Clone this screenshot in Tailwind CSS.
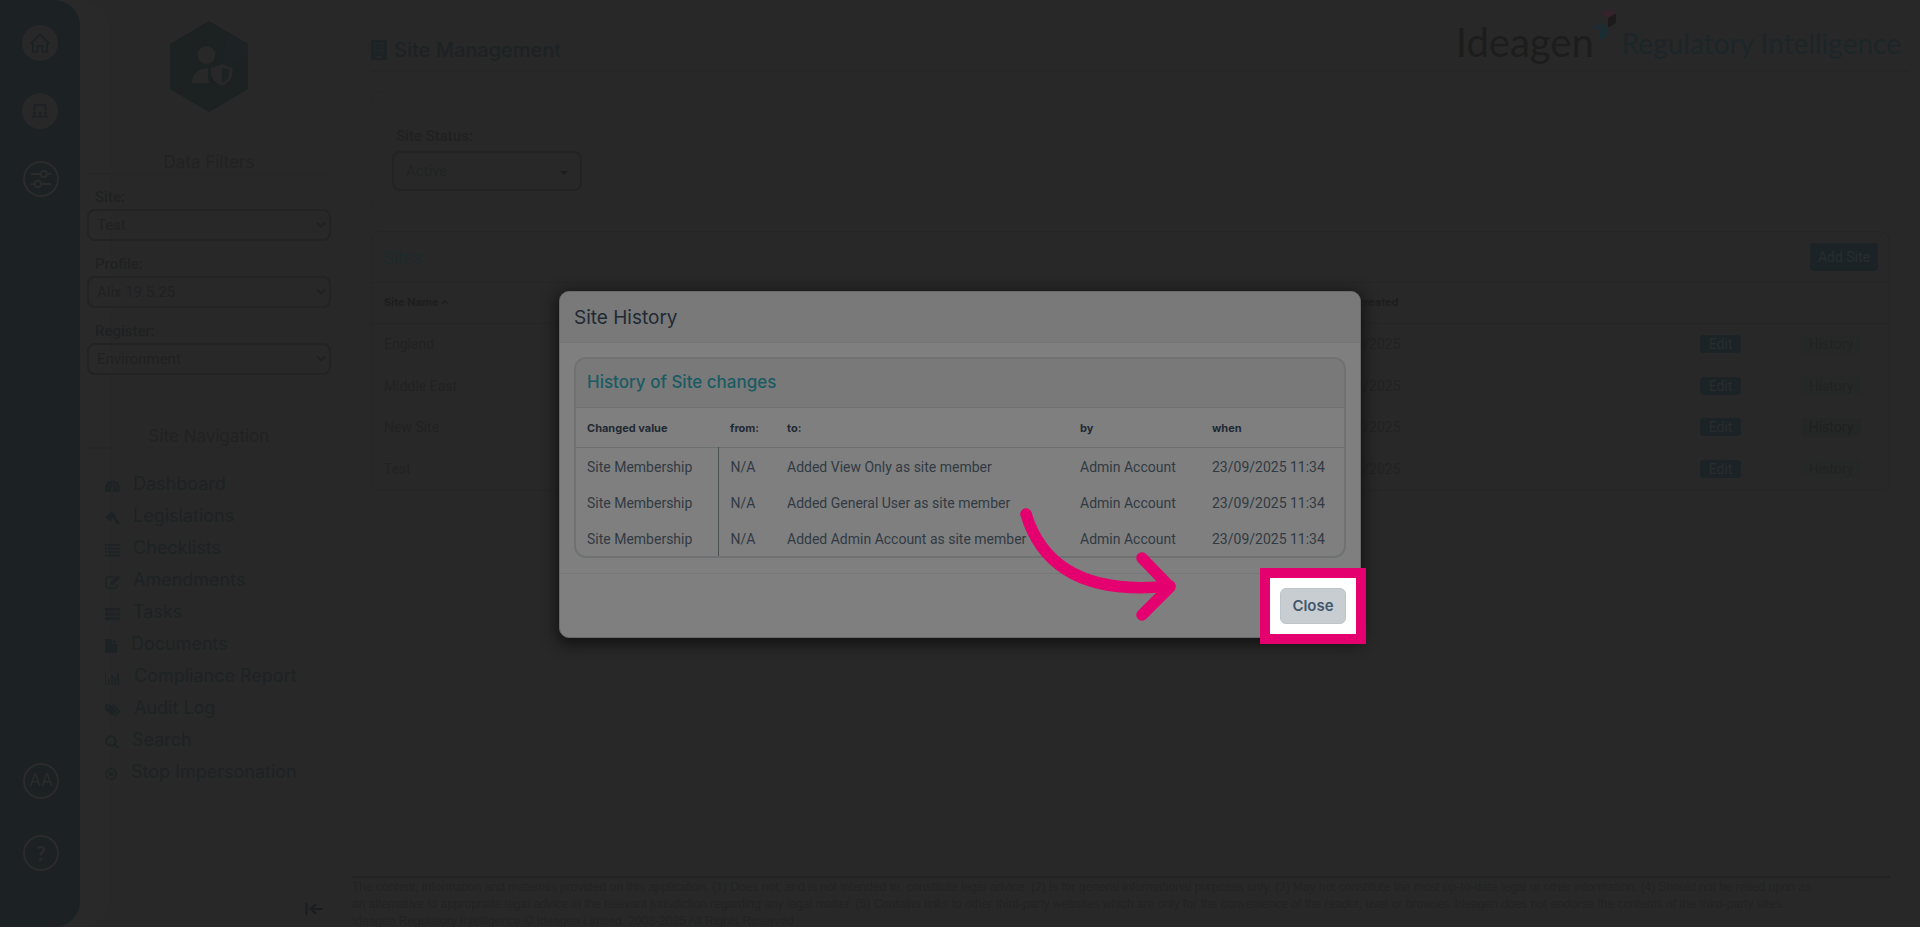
<!DOCTYPE html>
<html lang="en">
<head>
<meta charset="utf-8">
<meta name="viewport" content="width=device-width, initial-scale=1">
<title>Site Management</title>
<script src="https://cdn.jsdelivr.net/npm/@tailwindcss/browser@4"></script>
</head>
<body class="relative flex h-screen overflow-hidden bg-[#282828] font-['Roboto',sans-serif] text-[#202122]">

<!-- Icon rail -->
<nav aria-label="Main" class="flex w-20 shrink-0 flex-col items-center rounded-r-[26px] bg-[#1c2124] pt-[25px] pb-14 text-[#2b2b2b] shadow-[30px_0_0_#292929]">
  <a href="#" aria-label="Home" class="flex size-9 items-center justify-center rounded-full bg-[#282828] text-[#1c2124]">
    <svg class="size-5" viewBox="0 0 20 20" fill="none" stroke="currentColor" stroke-width="1.7" stroke-linejoin="round" stroke-linecap="round"><path d="M1 10.500 10 1.500l9 9h-2V19h-4.500v-6h-5v6H3v-8.500z"/></svg>
  </a>
  <a href="#" aria-label="Training" class="mt-8 flex size-9 items-center justify-center rounded-full bg-[#282828] text-[#1c2124]">
    <svg class="size-4" viewBox="0 0 16 16" fill="currentColor"><path d="M2.500 8V2h11v6" fill="none" stroke="currentColor" stroke-width="1.500"/><circle cx="2.500" cy="10" r="1.300"/><circle cx="8" cy="10" r="1.300"/><circle cx="13.500" cy="10" r="1.300"/><path d="M0 14.500c0-3.300 4.800-3.300 4.800 0zM5.600 14.500c0-3.300 4.800-3.300 4.800 0zM11.200 14.500c0-3.300 4.800-3.300 4.800 0z"/></svg>
  </a>
  <a href="#" aria-label="Filters" class="mt-8 ml-0.5 flex size-9 items-center justify-center rounded-full border-2 border-[#2b2b2b]">
    <svg class="h-5 w-5" viewBox="0 0 20 20" fill="none" stroke="currentColor" stroke-width="2"><path d="M0 5h9.500M16 5h4M0 15h3.500M10.500 15H20"/><circle cx="12.800" cy="5" r="3.200"/><circle cx="7" cy="15" r="3.200"/></svg>
  </a>
  <a href="#" class="mt-auto ml-0.5 flex size-9 items-center justify-center rounded-full border-2 border-[#2b2b2b] font-['Inter',sans-serif] text-[17px]">AA</a>
  <a href="#" class="mt-9 ml-0.5 flex size-9 items-center justify-center rounded-full border-2 border-[#2b2b2b] font-['Lato',sans-serif] text-xl font-bold">?</a>
</nav>

<!-- Filters and site navigation -->
<aside class="flex w-[272px] shrink-0 flex-col pr-[21px] pl-[7px]">
  <svg class="mt-[21px] ml-[83px] h-[91px] w-[78px]" viewBox="0 0 78 91">
    <path d="M39 0 78 23v45L39 91 0 68V23z" fill="#1c2122"/>
    <path d="M57 11 78 23v10L52 46z" fill="#1d2324"/>
    <g fill="#282828"><circle cx="36.500" cy="34" r="9"/><path d="M22 62c-1-9 7-15 16-15v9c0 3 1 5 2 6z"/><path d="M52 43l10.500 4v5c0 6-5 10.500-10.500 13-6-2.500-11-7-11-13v-5z"/></g>
    <path d="M52 46.500 59 49v3.500c0 4-3 7-7 9z" fill="#1c2122"/>
  </svg>
  <h2 class="mt-[39px] border-b-2 border-[#272727] text-center font-['Inter',sans-serif] text-[17px] leading-[22px] text-[#222222]">Data Filters</h2>
  <form class="mt-[11px] flex flex-col gap-3 text-[15px]">
    <div>
      <label for="site" class="block pl-2 leading-[23px] font-medium">Site:</label>
      <div class="relative">
        <select id="site" class="h-8 w-full appearance-none rounded-lg border-2 border-[#222323] px-2"><option>Test</option></select>
        <svg class="pointer-events-none absolute top-3 right-1 h-2 w-3" viewBox="0 0 12 8" fill="none" stroke="currentColor" stroke-width="2"><path d="M2 1.500l4 4 4-4"/></svg>
      </div>
    </div>
    <div>
      <label for="profile" class="block pl-2 leading-[23px] font-medium">Profile:</label>
      <div class="relative">
        <select id="profile" class="h-8 w-full appearance-none rounded-lg border-2 border-[#222323] px-2"><option>Alix 19.5.25</option></select>
        <svg class="pointer-events-none absolute top-3 right-1 h-2 w-3" viewBox="0 0 12 8" fill="none" stroke="currentColor" stroke-width="2"><path d="M2 1.500l4 4 4-4"/></svg>
      </div>
    </div>
    <div>
      <label for="register" class="block pl-2 leading-[23px] font-medium">Register:</label>
      <div class="relative">
        <select id="register" class="h-8 w-full appearance-none rounded-lg border-2 border-[#222323] px-2"><option>Environment</option></select>
        <svg class="pointer-events-none absolute top-3 right-1 h-2 w-3" viewBox="0 0 12 8" fill="none" stroke="currentColor" stroke-width="2"><path d="M2 1.500l4 4 4-4"/></svg>
      </div>
    </div>
  </form>
  <h2 class="mt-[50px] border-b-2 border-[#272727] text-center font-['Inter',sans-serif] text-[17px] leading-[22px] text-[#222222]">Site Navigation</h2>
  <ul class="mt-[19px] flex flex-col pl-[18px] font-['Inter',sans-serif] text-lg leading-8 whitespace-nowrap text-[#1d2324]">
    <li><a href="#" class="flex items-center gap-[13px]"><svg class="mt-1 h-3.5 w-[15px]" viewBox="0 0 16 14"><path d="M8 1a8 8 0 0 0-6.800 12h13.600A8 8 0 0 0 8 1z" fill="currentColor"/><path d="M7.500 11 9 5" stroke="#282828" stroke-width="1.400"/><g fill="#282828"><circle cx="3" cy="9" r="1"/><circle cx="4.500" cy="5.500" r="1"/><circle cx="8" cy="3.500" r="1"/><circle cx="11.500" cy="5.500" r="1"/><circle cx="13" cy="9" r="1"/><circle cx="7.500" cy="11" r="1.500"/></g></svg>Dashboard</a></li>
    <li><a href="#" class="flex items-center gap-[13px]"><svg class="mt-1 h-3.5 w-[15px]" viewBox="0 0 15 14" fill="currentColor"><path d="M6.500 0 11 4.500 9.500 6l-.5-.3L6 8.700l.3.500L5 10.500.5 6 1.800 4.700l.6.300 3-3L5 1.500z"/><path d="M8 7l1.800-1.600L15 11.500 12.500 14z"/></svg>Legislations</a></li>
    <li><a href="#" class="flex items-center gap-[13px]"><svg class="mt-1 h-3.5 w-[15px]" viewBox="0 0 15 14" fill="currentColor"><path d="M0 1h2v2H0zM3 1h12v2H3zM0 4.500h2v2H0zM3 4.500h12v2H3zM0 8h2v2H0zM3 8h12v2H3zM0 11.500h2v2H0zM3 11.500h12v2H3z"/></svg>Checklists</a></li>
    <li><a href="#" class="flex items-center gap-[13px]"><svg class="mt-1 h-3.5 w-[15px]" viewBox="0 0 15 14"><path d="M9.500 2H3a2 2 0 0 0-2 2v7a2 2 0 0 0 2 2h7a2 2 0 0 0 2-2V9" fill="none" stroke="currentColor" stroke-width="1.300"/><path d="M12.500 0 15 2.500 8 10H5.500V7.500z" fill="currentColor"/></svg>Amendments</a></li>
    <li><a href="#" class="flex items-center gap-[13px]"><svg class="mt-1 h-3.5 w-[15px]" viewBox="0 0 15 14"><path d="M0 1h15v3.300H0zM0 5.500h15v3.300H0zM0 10h15v3.300H0z" fill="currentColor"/><path d="M9 3h5M6 7.200h8M10 11.600h4" stroke="#282828" stroke-width=".6"/></svg>Tasks</a></li>
    <li><a href="#" class="flex items-center gap-3.5"><svg class="mt-1 h-3.5 w-3" viewBox="0 0 12 14" fill="currentColor"><path d="M0 0h7v5h5v9H0z"/><path d="M8 0l4 4H8z"/></svg>Documents</a></li>
    <li><a href="#" class="flex items-center gap-[13px]"><svg class="mt-1 h-3.5 w-4" viewBox="0 0 16 14" fill="currentColor"><path d="M0 1h1v11.500h15v1H0zM3 8h2v3.500H3zM6 4h2v7.500H6zM9 6h2v5.500H9zM12 2h2v9.500h-2z"/></svg>Compliance Report</a></li>
    <li><a href="#" class="flex items-center gap-[13px]"><svg class="mt-1 h-3.5 w-4" viewBox="0 0 16 14"><path d="M0 1.500h5.500L12 8l-5 5L0 6.500z" fill="currentColor"/><path d="M7.500 1.500 14.500 8 9.500 13" fill="none" stroke="currentColor" stroke-width="1.500"/><circle cx="2.800" cy="4" r="1" fill="#282828"/></svg>Audit Log</a></li>
    <li><a href="#" class="flex items-center gap-[13px]"><svg class="mt-1 h-3.5 w-3.5" viewBox="0 0 14 14" fill="none" stroke="currentColor" stroke-width="2"><circle cx="6" cy="6" r="4.800"/><path d="M9.500 9.500 13 13"/></svg>Search</a></li>
    <li><a href="#" class="flex items-center gap-3.5"><svg class="mt-1 size-3" viewBox="0 0 12 12" fill="none" stroke="currentColor" stroke-width="1.500"><circle cx="6" cy="6" r="5.200"/><path d="M4 4l4 4M8 4 4 8"/></svg>Stop Impersonation</a></li>
  </ul>
  <button type="button" aria-label="Collapse panel" class="mt-auto mr-2 mb-[11px] self-end text-[#1c1d1e]">
    <svg class="h-3.5 w-[18px]" viewBox="0 0 18 14" fill="none" stroke="currentColor" stroke-width="2"><path d="M1.500 1v12M17.500 7H6M11 2 6 7l5 5"/></svg>
  </button>
</aside>

<!-- Page content -->
<main class="flex min-w-0 flex-1 flex-col">
  <header class="mr-[11px] ml-[19px] flex h-[72px] items-start border-b-2 border-[#262626] pr-2">
    <h1 class="mt-[38px] flex items-center gap-[7px] font-['Inter',sans-serif] text-xl leading-6 font-medium text-[#1d2324]">
      <svg class="h-5 w-4" viewBox="0 0 16 20"><path d="M0 0h16v20H0z" fill="currentColor"/><path d="M2 3.500h12M2 7h12M2 10.500h12M2 14h12M4.500 2v12M8 2v12M11.500 2v12" stroke="#23292a" stroke-width=".7"/><path d="M5.500 16h5v2h-5z" fill="#282828"/></svg>
      Site Management
    </h1>
    <div class="mt-2 ml-auto flex items-start font-['Lato',sans-serif]">
      <span class="mt-[9px] text-[40px] leading-[50px] text-[#1d1d1d]">Ideagen</span>
      <svg class="mt-px -ml-0.5 h-8 w-6" viewBox="0 0 24 32"><path d="M8.500 5 16 0l8 4.500L16 9z" fill="#36222a"/><path d="M16 9l8-4.500V14l-8 4.500z" fill="#1d1a1c"/><path d="M1 18l8-4.500 7 4-7 5z" fill="#1e2c32"/><path d="M8 22l8-4.500V26l-8 5z" fill="#1b2d34"/></svg>
      <span class="mt-2.5 ml-1.5 text-[28px] leading-[50px] text-[#1c2628]">Regulatory Intelligence</span>
    </div>
  </header>

  <section aria-label="Filter" class="mt-[19px] mr-[30px] ml-[19px] h-[120px] rounded-[10px] border border-[#272727] px-5 pt-[33px]">
    <label for="status" class="block pl-1 text-[15px] leading-[22px] font-medium">Site Status:</label>
    <div class="relative mt-1 w-[190px]">
      <select id="status" class="h-10 w-full appearance-none rounded-lg border-2 border-[#232323] px-3 text-[15px] text-[#222323]"><option>Active</option></select>
      <svg class="pointer-events-none absolute top-5 right-3.5 h-1 w-2" viewBox="0 0 8 4" fill="#1c1d1e"><path d="M0 0h8L4 4z"/></svg>
    </div>
  </section>

  <section class="mt-5 mr-[30px] ml-[19px] rounded-[10px] border border-[#252525] text-sm">
    <div class="flex h-[50px] items-center justify-between px-[11px]">
      <h2 class="pt-0.5 font-['Inter',sans-serif] text-[17px] text-[#1d2a2c]">Sites</h2>
      <button type="button" class="h-7 rounded-sm bg-[#1c2327] px-2 text-[#282d2f]">Add Site</button>
    </div>
    <table class="w-full table-fixed text-left text-[#222223]">
      <colgroup><col class="w-[500px]"><col><col class="w-[359px]"><col class="w-[101px]"><col class="w-[105px]"></colgroup>
      <thead class="h-[41px] border-y border-[#252525] font-['Inter',sans-serif] text-[11px] text-[#1d1e1e]">
        <tr><th class="pl-3">Site Name <svg class="mb-0.5 inline h-1.5 w-2" viewBox="0 0 8 6" fill="none" stroke="currentColor" stroke-width="1.300"><path d="M1 5l3-3 3 3"/></svg></th><th></th><th class="pl-1.5">Date created</th><th></th><th></th></tr>
      </thead>
      <tbody>
        <tr class="h-[41px]"><td class="pl-3">England</td><td></td><td class="pl-0.5">19/05/2025</td><td class="pl-[17px]"><button type="button" class="h-[18px] w-[41px] rounded-sm bg-[#1c2326] leading-4 text-[#282d2f]">Edit</button></td><td class="pl-[17px]"><button type="button" class="h-[19px] w-[60px] rounded-sm bg-[#262827] leading-4">History</button></td></tr>
        <tr class="h-[42px]"><td class="pl-3">Middle East</td><td></td><td class="pl-0.5">11/09/2025</td><td class="pl-[17px]"><button type="button" class="h-[18px] w-[41px] rounded-sm bg-[#1c2326] leading-4 text-[#282d2f]">Edit</button></td><td class="pl-[17px]"><button type="button" class="h-[19px] w-[60px] rounded-sm bg-[#262827] leading-4">History</button></td></tr>
        <tr class="h-[41px]"><td class="pl-3">New Site</td><td></td><td class="pl-0.5">23/09/2025</td><td class="pl-[17px]"><button type="button" class="h-[18px] w-[41px] rounded-sm bg-[#1c2326] leading-4 text-[#282d2f]">Edit</button></td><td class="pl-[17px]"><button type="button" class="h-[19px] w-[60px] rounded-sm bg-[#252726] leading-4 text-[#1e1f20]">History</button></td></tr>
        <tr class="h-[42px]"><td class="pl-3">Test</td><td></td><td class="pl-0.5">19/05/2025</td><td class="pl-[17px]"><button type="button" class="h-[18px] w-[41px] rounded-sm bg-[#1c2326] leading-4 text-[#282d2f]">Edit</button></td><td class="pl-[17px]"><button type="button" class="h-[19px] w-[60px] rounded-sm bg-[#262827] leading-4">History</button></td></tr>
      </tbody>
    </table>
  </section>

  <footer class="mt-auto mr-[30px] h-[51px] border-t-2 border-[#222222] pt-px font-['Liberation_Sans',sans-serif] text-xs leading-[17px] whitespace-nowrap text-[#222323]">
    The content, information and materials provided on this application. (1) Does not, and is not intended to, constitute legal advice. (2) Is for general informational purposes only. (3) May not constitute the most up-to-date legal or other information. (4) Should not be relied upon as<br>
    an alternative to appropriate legal advice in the relevant jurisdiction regarding any legal matter. (5) Contains links to other third-party websites which are only for the convenience of the reader, user or browser. Ideagen does not endorse the contents of the third-party sites.<br>
    Ideagen Regulatory Intelligence © Ideagen Limited. 2003-2025 All Rights Reserved
  </footer>
</main>

<!-- Site history dialog -->
<div class="absolute inset-0 flex items-start justify-center pt-[291px]">
  <div role="dialog" aria-labelledby="dialog-title" class="relative w-[802px] rounded-[10px] border border-[#696969] bg-[#7f7f7f] text-[#313a43] shadow-[0_4px_14px_3px_#141414]">
    <h2 id="dialog-title" class="flex h-[51px] items-center rounded-t-[9px] border-b border-[#757575] bg-[#797979] px-3.5 pt-0.5 font-['Inter',sans-serif] text-[19px] text-[#1f2933]">Site History</h2>
    <div class="px-3.5 pt-3.5 pb-[15px]">
      <div class="overflow-hidden rounded-xl border-2 border-[#6f7172]">
        <h3 class="flex h-12 items-center bg-[#797979] px-[11px] font-['Inter',sans-serif] text-[17px] font-medium text-[#1a5b63]">History of Site changes</h3>
        <table class="w-full table-fixed text-left text-sm">
          <colgroup><col class="w-[142px]"><col class="w-[57px]"><col><col class="w-[132px]"><col class="w-[144px]"></colgroup>
          <thead class="h-10 border-y border-[#6d7071] font-['Inter',sans-serif] text-[11px] text-[#1f2933]">
            <tr><th class="pt-0.5 pl-[11px]">Changed value</th><th class="pt-0.5 pl-3">from:</th><th class="pt-0.5 pl-3">to:</th><th class="pt-0.5 pl-3">by</th><th class="pt-0.5 pl-3">when</th></tr>
          </thead>
          <tbody>
            <tr class="h-9"><td class="border-r border-[#4a4f52] pt-0.5 pl-[11px]">Site Membership</td><td class="pt-0.5 pl-3">N/A</td><td class="pt-0.5 pl-3">Added View Only as site member</td><td class="pt-0.5 pl-3">Admin Account</td><td class="pt-0.5 pl-3">23/09/2025 11:34</td></tr>
            <tr class="h-9"><td class="border-r border-[#4a4f52] pt-0.5 pl-[11px]">Site Membership</td><td class="pt-0.5 pl-3">N/A</td><td class="pt-0.5 pl-3">Added General User as site member</td><td class="pt-0.5 pl-3">Admin Account</td><td class="pt-0.5 pl-3">23/09/2025 11:34</td></tr>
            <tr class="h-9"><td class="border-r border-[#4a4f52] pt-0.5 pl-[11px]">Site Membership</td><td class="pt-0.5 pl-3">N/A</td><td class="pt-0.5 pl-3">Added Admin Account as site member</td><td class="pt-0.5 pl-3">Admin Account</td><td class="pt-0.5 pl-3">23/09/2025 11:34</td></tr>
          </tbody>
        </table>
      </div>
    </div>
    <div class="flex h-16 items-start justify-end border-t border-[#777777] pt-3.5 pr-3.5">
      <!-- Highlighted close control -->
      <div class="-mt-5 -mr-5 -mb-5 border-[10px] border-[#e5006f] bg-white p-2.5">
        <button type="button" class="h-9 w-[66px] rounded-md border border-[#bcc4ca] bg-[#c8cdd2] pt-0.5 font-['Inter',sans-serif] text-[15px] font-semibold text-[#44566c]">Close</button>
      </div>
    </div>
    <!-- Pointer arrow over the dialog -->
    <svg class="pointer-events-none absolute top-[215px] left-[460px] h-[115px] w-[157px]" viewBox="0 0 157 115" fill="none" stroke="#e5006f" stroke-width="11.500" stroke-linecap="round" stroke-linejoin="round"><path d="M6 7C22 60 66 88 150 79M122 51l28 29-28 28"/></svg>
  </div>
</div>
</body>
</html>
